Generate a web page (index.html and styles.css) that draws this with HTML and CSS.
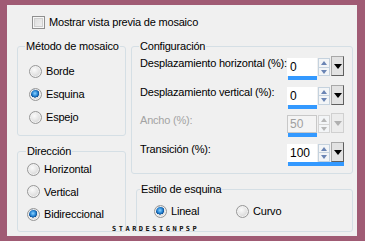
FILE: index.html
```html
<!DOCTYPE html>
<html lang="es">
<head>
<meta charset="utf-8">
<title>Mosaico</title>
<link rel="stylesheet" href="styles.css">
</head>
<body>
<div class="frame">
  <div class="panel">
    <div class="check-row">
      <span class="checkbox"></span>
      <span>Mostrar vista previa de mosaico</span>
    </div>
    <div class="columns">
      <div class="left-col">
        <fieldset class="group g-method">
          <legend>Método de mosaico</legend>
          <div class="radio-list list-method">
            <div class="opt"><span class="radio"></span>Borde</div>
            <div class="opt"><span class="radio on"></span>Esquina</div>
            <div class="opt"><span class="radio"></span>Espejo</div>
          </div>
        </fieldset>
        <fieldset class="group g-dir">
          <legend>Dirección</legend>
          <div class="radio-list list-dir">
            <div class="opt"><span class="radio"></span>Horizontal</div>
            <div class="opt"><span class="radio"></span>Vertical</div>
            <div class="opt"><span class="radio on"></span>Bidireccional</div>
          </div>
        </fieldset>
      </div>
      <div class="right-col">
        <fieldset class="group g-config">
          <legend>Configuración</legend>
          <div class="rows">
            <div class="row">
              <span class="lbl">Desplazamiento horizontal (%):</span>
              <div class="spin">
                <div class="spin-top"><span class="field">0</span><span class="arrows"><span class="up"></span><span class="down"></span></span><span class="drop"></span></div>
                <div class="bar" style="width:29px"></div>
              </div>
            </div>
            <div class="row">
              <span class="lbl">Desplazamiento vertical (%):</span>
              <div class="spin">
                <div class="spin-top"><span class="field">0</span><span class="arrows"><span class="up"></span><span class="down"></span></span><span class="drop"></span></div>
                <div class="bar" style="width:29px"></div>
              </div>
            </div>
            <div class="row disabled">
              <span class="lbl">Ancho (%):</span>
              <div class="spin">
                <div class="spin-top"><span class="field">50</span><span class="arrows"><span class="up"></span><span class="down"></span></span><span class="drop"></span></div>
                <div class="bar" style="width:29px"></div>
              </div>
            </div>
            <div class="row">
              <span class="lbl">Transición (%):</span>
              <div class="spin">
                <div class="spin-top"><span class="field">100</span><span class="arrows"><span class="up"></span><span class="down"></span></span><span class="drop"></span></div>
                <div class="bar" style="width:56px"></div>
              </div>
            </div>
          </div>
        </fieldset>
        <fieldset class="group g-style">
          <legend>Estilo de esquina</legend>
          <div class="radio-row">
            <div class="opt opt-lineal"><span class="radio on"></span>Lineal</div>
            <div class="opt"><span class="radio"></span>Curvo</div>
          </div>
        </fieldset>
      </div>
    </div>
  </div>
  <div class="watermark">STARDESIGNPSP</div>
</div>
</body>
</html>
```
FILE: styles.css
```css
html, body {
  margin: 0;
  padding: 0;
}
body {
  width: 365px;
  height: 241px;
  overflow: hidden;
  font-family: "Liberation Sans", Arial, sans-serif;
  font-size: 11px;
  letter-spacing: -0.2px;
  color: #000;
}
.frame {
  position: relative;
  box-sizing: border-box;
  width: 365px;
  height: 241px;
  border-style: solid;
  border-color: #a05b74;
  border-width: 5px 8px 5px 7px;
  background: #f0f0f0;
}
.panel {
  padding: 10px 4px 0 10px;
}
.check-row {
  display: flex;
  align-items: center;
  gap: 4px;
  height: 14px;
  line-height: 14px;
  margin-left: 15px;
  white-space: nowrap;
}
.checkbox {
  box-sizing: border-box;
  width: 13px;
  height: 13px;
  border: 1px solid #8f8f8f;
  background: linear-gradient(135deg, #d9d9d9 0%, #f4f4f4 100%);
  box-shadow: inset 0 0 0 1px #f7f7f7, inset 0 0 0 2px #cfcfcf;
}
.columns {
  display: flex;
  gap: 5px;
  margin-top: 10px;
}
.left-col {
  display: flex;
  flex-direction: column;
  gap: 8px;
  width: 109px;
}
.right-col {
  display: flex;
  flex-direction: column;
  gap: 8px;
  width: 222px;
}
.group {
  margin: 0;
  padding: 0;
  border: 1px solid #d5dfe5;
  border-radius: 3px;
  box-sizing: border-box;
  min-width: 0;
}
.group legend {
  padding: 0 1px;
  margin-left: 7px;
  line-height: 14px;
  height: 14px;
  white-space: nowrap;
}
.g-method { height: 97px; }
.g-dir { height: 88px; }
.g-dir legend { margin-left: 8px; }
.g-config { height: 135px; }
.g-style { height: 50px; margin-left: 5px; }
.g-style legend { margin-left: 3px; }

.radio-list {
  display: flex;
  flex-direction: column;
}
.list-method {
  margin-top: 11px;
  padding-left: 11px;
  gap: 9px;
}
.list-dir {
  margin-top: 4px;
  padding-left: 9px;
  gap: 8.5px;
}
.opt {
  display: flex;
  align-items: center;
  gap: 4px;
  height: 14px;
  line-height: 14px;
  white-space: nowrap;
}
.radio {
  box-sizing: border-box;
  width: 13px;
  height: 13px;
  border-radius: 50%;
  border: 1px solid #979797;
  background: radial-gradient(circle at 40% 35%, #fbfbfb 0%, #e6e6e6 45%, #c9c9c9 100%);
  box-shadow: inset 0 0 0 1px #f2f2f2;
}
.radio.on {
  background:
    radial-gradient(circle at 45% 40%, #8fd3ff 0%, #2b8ad8 28%, #0b4f96 45%, transparent 48%),
    radial-gradient(circle at 40% 35%, #fbfbfb 0%, #e6e6e6 45%, #c9c9c9 100%);
}

.rows {
  display: flex;
  flex-direction: column;
  gap: 4.5px;
  margin-top: 3px;
  padding: 0 8px 0 8px;
}
.row {
  display: flex;
  justify-content: space-between;
  align-items: flex-start;
  line-height: 14px;
}
.row .lbl {
  white-space: nowrap;
}
.row.disabled .lbl { color: #a3a3a3; }
.spin {
  margin-top: 2px;
  width: 57px;
  height: 22px;
  flex: none;
  display: flex;
  flex-direction: column;
}
.spin-top {
  display: flex;
  height: 18px;
}
.field {
  box-sizing: border-box;
  width: 30px;
  background: #fff;
  padding-left: 3px;
  line-height: 19px;
  font-size: 12px;
  letter-spacing: 0;
}
.arrows {
  box-sizing: border-box;
  width: 12px;
  margin-left: 1px;
  display: flex;
  flex-direction: column;
  border: 1px solid #c5d2de;
  background: #f3f5f7;
}
.arrows .up, .arrows .down {
  flex: 1;
  position: relative;
}
.arrows .down { border-top: 1px solid #c5d2de; }
.arrows .up::after, .arrows .down::after {
  content: "";
  position: absolute;
  left: 2px;
  top: 2px;
  border-left: 3px solid transparent;
  border-right: 3px solid transparent;
}
.arrows .up::after { border-bottom: 4px solid #6a84b4; }
.arrows .down::after { border-top: 4px solid #6a84b4; top: 2px; }
.drop {
  box-sizing: border-box;
  width: 13px;
  margin-left: 1px;
  margin-top: -2px;
  height: 20px;
  border: 1px solid #5f5f5f;
  border-top-color: #a8a8a8;
  border-left-color: #a8a8a8;
  background: #e2e2e2;
  position: relative;
}
.drop::after {
  content: "";
  position: absolute;
  left: 2px;
  top: 7px;
  border-left: 4px solid transparent;
  border-right: 4px solid transparent;
  border-top: 5px solid #000;
}
.bar {
  height: 4px;
  background: #3399ff;
  margin-left: 1px;
}
.row.disabled .field {
  background: #f4f4f4;
  color: #a0a0a0;
  box-shadow: inset 0 0 0 1px #c8c8c8;
}
.row.disabled .arrows { border-color: #d4d4d4; }
.row.disabled .arrows .down { border-top-color: #d4d4d4; }
.row.disabled .arrows .up::after { border-bottom-color: #b6b6b6; }
.row.disabled .arrows .down::after { border-top-color: #b6b6b6; }
.row.disabled .drop {
  border-color: #d0d0d0;
  background: #ececec;
}
.row.disabled .drop::after { border-top-color: #b0b0b0; }

.radio-row {
  display: flex;
  margin-top: 8px;
  padding-left: 17px;
}
.opt-lineal { width: 82px; }

.watermark {
  position: absolute;
  left: 105px;
  top: 221px;
  font-family: "DejaVu Sans Mono", monospace;
  font-size: 7px;
  font-weight: bold;
  letter-spacing: 2.5px;
  line-height: 7px;
  color: #111;
}
```
